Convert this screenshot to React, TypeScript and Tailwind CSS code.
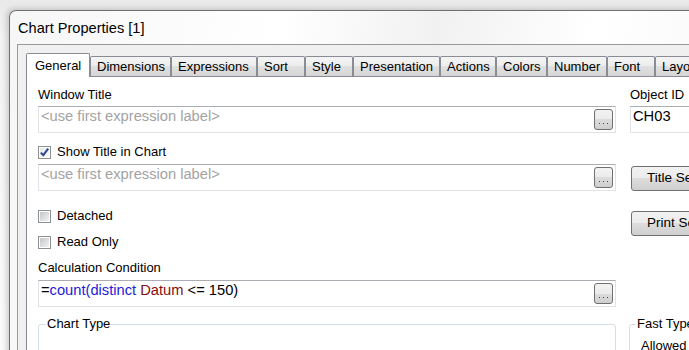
import React from "react";

const tabs: { label: string; w: number }[] = [
  { label: "Dimensions", w: 81 },
  { label: "Expressions", w: 86 },
  { label: "Sort", w: 48 },
  { label: "Style", w: 48 },
  { label: "Presentation", w: 87 },
  { label: "Actions", w: 56 },
  { label: "Colors", w: 51 },
  { label: "Number", w: 60 },
  { label: "Font", w: 48 },
  { label: "Layout", w: 54 },
];

function DotsButton() {
  return (
    <div className="absolute right-[2px] top-[2px] w-[19px] h-[21px] rounded-[3px] border border-[#707070] bg-[linear-gradient(to_bottom,#f2f2f2,#ebebeb_50%,#dddddd_50%,#cfcfcf)] flex items-end justify-center gap-[3px] pb-[5px]">
      <span className="w-[1px] h-[1px] bg-[#404040]" />
      <span className="w-[1px] h-[1px] bg-[#404040]" />
      <span className="w-[1px] h-[1px] bg-[#404040]" />
    </div>
  );
}

function TextBox({
  children,
  button,
  className = "",
}: {
  children?: React.ReactNode;
  button?: boolean;
  className?: string;
}) {
  return (
    <div
      className={`relative h-[27px] shrink-0 border border-[#dfe3e8] border-t-[#abadb3] bg-white pl-[2px] pt-[1px] text-[14.7px] leading-[17px] whitespace-nowrap ${className}`}
    >
      {children}
      {button && <DotsButton />}
    </div>
  );
}

function CheckBox({ checked, label, className = "" }: { checked?: boolean; label: string; className?: string }) {
  return (
    <div className={`h-[16px] flex items-center gap-[6px] text-[13px] leading-[16px] ${className}`}>
      <span className="w-[13px] h-[13px] border border-[#8e8f8f] bg-white p-[1px] flex shrink-0">
        <span
          className={`relative flex-1 ${
            checked
              ? "bg-[linear-gradient(135deg,#e6e8ec,#fbfbfb)]"
              : "bg-[linear-gradient(135deg,#c3c6cb,#f2f2f3)]"
          }`}
        >
          {checked && (
            <svg className="absolute left-[-1px] top-[-1px]" width="11" height="11" viewBox="0 0 11 11">
              <path d="M1.8 5.6 L4.3 8.2 L9.2 1.6" fill="none" stroke="#2e4a8e" strokeWidth="2" />
            </svg>
          )}
        </span>
      </span>
      <span>{label}</span>
    </div>
  );
}

function WinButton({ label, className = "" }: { label: string; className?: string }) {
  return (
    <div
      className={`h-[25px] w-[120px] rounded-[3px] border border-[#707070] bg-[linear-gradient(to_bottom,#f2f2f2,#ebebeb_50%,#dddddd_50%,#cfcfcf)] flex items-center pl-[15px] text-[13.5px] whitespace-nowrap ${className}`}
    >
      {label}
    </div>
  );
}

export default function App() {
  return (
    <div className="w-[689px] h-[350px] overflow-hidden bg-[linear-gradient(to_bottom,#e9e9e9,#f4f4f4_40px,#fbfbfb)] font-['Liberation_Sans',Arial,sans-serif] text-black">
      <div className="ml-[9px] mt-[10px] w-[720px] h-[360px] rounded-tl-[7px] border-l border-t border-[#707070] bg-[linear-gradient(100deg,#f6f6f6,#ffffff_35%,#f1f1f1_55%,#ffffff_75%,#f7f7f7)] shadow-[-2px_-1px_6px_rgba(0,0,0,0.2)] flex flex-col">
        <div className="h-[33px] shrink-0 flex items-center pl-[8px] text-[14.6px] leading-[18px]">
          Chart Properties [1]
        </div>
        <div className="ml-[7px] flex-1 border-l border-t border-[#9a9a9a] bg-[#f0f0f0] pl-[8px] pt-[8px] flex flex-col">
          <div className="h-[23px] shrink-0 flex items-end text-[13px] leading-[16px]">
            <div className="relative z-10 mb-[-1px] h-[24px] w-[64px] shrink-0 rounded-t-[2px] border border-b-0 border-[#898c95] bg-white flex items-center pl-[8px]">
              General
            </div>
            {tabs.map((t) => (
              <div
                key={t.label}
                style={{ width: t.w }}
                className="h-[20px] shrink-0 rounded-t-[2px] border border-b-0 border-[#898c95] bg-[linear-gradient(to_bottom,#f4f4f4,#ececec_50%,#e0e0e0_50%,#d6d6d6)] flex items-center pl-[6px] whitespace-nowrap"
              >
                {t.label}
              </div>
            ))}
          </div>
          <div className="flex-1 border-l border-t border-[#898c95] bg-white flex">
            <div className="ml-[11px] w-[578px] shrink-0 pt-[10px] flex flex-col">
              <div className="h-[16px] text-[13px] leading-[16px]">Window Title</div>
              <TextBox button className="mt-[3px] text-[#a3a3a3]">
                &lt;use first expression label&gt;
              </TextBox>
              <CheckBox checked label="Show Title in Chart" className="mt-[11px]" />
              <TextBox button className="mt-[4px] text-[#a3a3a3]">
                &lt;use first expression label&gt;
              </TextBox>
              <CheckBox label="Detached" className="mt-[17px]" />
              <CheckBox label="Read Only" className="mt-[10px]" />
              <div className="mt-[10px] h-[16px] text-[13px] leading-[16px]">Calculation Condition</div>
              <TextBox button className="mt-[4px]">
                <span>=</span>
                <span className="text-[#1c1cd8]">count(distinct</span>{" "}
                <span className="text-[#850f0f]">Datum</span>
                <span> &lt;= 150)</span>
              </TextBox>
              <fieldset className="mt-[9px] h-[60px] rounded-[3px] border border-[#d5dfe5]">
                <legend className="ml-[7px] px-[1px] text-[13px] leading-[16px]">Chart Type</legend>
              </fieldset>
            </div>
            <div className="ml-[14px] w-[130px] shrink-0 pt-[10px] flex flex-col">
              <div className="h-[16px] text-[13px] leading-[16px] whitespace-nowrap">Object ID</div>
              <TextBox className="mt-[3px] text-[14.3px]">CH03</TextBox>
              <WinButton label="Title Settings..." className="mt-[33px] ml-[1px]" />
              <WinButton label="Print Settings..." className="mt-[20px] ml-[1px]" />
              <fieldset className="mt-[80px] ml-[-1px] h-[60px] rounded-[3px] border border-[#d5dfe5]">
                <legend className="ml-[6px] px-[1px] text-[13px] leading-[16px] whitespace-nowrap">Fast Type Change</legend>
                <div className="mt-[6px] pl-[11px] text-[13px] leading-[16px] whitespace-nowrap">Allowed Types</div>
              </fieldset>
            </div>
          </div>
        </div>
      </div>
    </div>
  );
}
